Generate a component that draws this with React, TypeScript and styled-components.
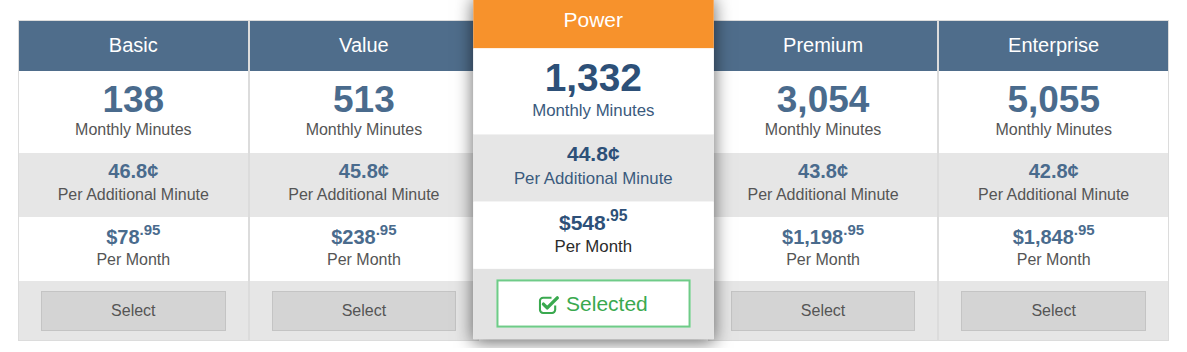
import React, { FunctionComponent } from 'react';
import styled, { createGlobalStyle, css } from 'styled-components';

const GlobalStyle = createGlobalStyle`
	html, body {
		margin: 0;
		padding: 0;
		background: #fff;
		overflow: hidden;
	}
	body {
		font-family: "Liberation Sans", Arial, Helvetica, sans-serif;
	}
`;

type Plan = {
	name: string;
	minutes: string;
	rate: string;
	price: string;
	selected?: boolean;
};

const plans: Plan[] = [
	{ name: 'Basic', minutes: '138', rate: '46.8¢', price: '$78' },
	{ name: 'Value', minutes: '513', rate: '45.8¢', price: '$238' },
	{ name: 'Power', minutes: '1,332', rate: '44.8¢', price: '$548', selected: true },
	{ name: 'Premium', minutes: '3,054', rate: '43.8¢', price: '$1,198' },
	{ name: 'Enterprise', minutes: '5,055', rate: '42.8¢', price: '$1,848' },
];

const Table = styled.div`
	display: flex;
	align-items: flex-start;
	margin: 20px 18px 0;
`;

const Column = styled.div<{ $featured?: boolean }>`
	flex: 1 1 0;
	min-width: 0;
	box-sizing: border-box;
	border: 1px solid #dcdcdc;
	background: #fff;
	text-align: center;

	${(p) =>
		p.$featured &&
		css`
			border: none;
			position: relative;
			z-index: 2;
			transform: translateY(-17px) scale(1.05);
			box-shadow: 0 4px 16px rgba(0, 0, 0, 0.6);
		`}
`;

const Header = styled.div<{ $featured?: boolean }>`
	height: ${(p) => (p.$featured ? '51px' : '50px')};
	line-height: ${(p) => (p.$featured ? '49px' : '48px')};
	background: ${(p) => (p.$featured ? '#f7922c' : '#4f6d8b')};
	color: #fff;
	font-size: 20px;
`;

const Row = styled.div<{ $shade?: boolean; $top: number; $h: number }>`
	box-sizing: border-box;
	height: ${(p) => p.$h}px;
	padding-top: ${(p) => p.$top}px;
	background: ${(p) => (p.$shade ? '#e6e6e6' : '#fff')};
`;

const Big = styled.div<{ $featured?: boolean }>`
	font-size: 37px;
	line-height: 40px;
	font-weight: bold;
	color: ${(p) => (p.$featured ? '#2d5078' : '#4a6b8d')};
`;

const Amount = styled.div<{ $featured?: boolean; $lh: number }>`
	font-size: 20px;
	line-height: ${(p) => p.$lh}px;
	font-weight: bold;
	color: ${(p) => (p.$featured ? '#2d5078' : '#4a6b8d')};
`;

const Cents = styled.span`
	font-size: 15px;
	line-height: 0;
	vertical-align: 9px;
`;

const Label = styled.div<{ $color: string; $lh: number }>`
	font-size: 16px;
	line-height: ${(p) => p.$lh}px;
	color: ${(p) => p.$color};
`;

const ButtonRow = styled.div<{ $featured?: boolean }>`
	box-sizing: border-box;
	height: ${(p) => (p.$featured ? '67px' : '59px')};
	padding: 10px 22px 0;
	background: ${(p) => (p.$featured ? '#e3e3e3' : '#e6e6e6')};
`;

const SelectButton = styled.div`
	box-sizing: border-box;
	height: 40px;
	border: 1px solid #c4c4c4;
	background: #d4d4d4;
	color: #555;
	font-size: 16px;
	line-height: 38px;
`;

const SelectedButton = styled.div`
	box-sizing: border-box;
	height: 46px;
	border: 2px solid #6fcb88;
	background: #fff;
	color: #3aa94f;
	font-size: 20px;
	display: flex;
	align-items: center;
	justify-content: center;
	gap: 6px;
`;

const CheckIcon: FunctionComponent = () => (
	<svg width="20" height="19" viewBox="0 0 20 19" aria-hidden="true">
		<path
			d="M12.5 3.5 H4.5 a3 3 0 0 0 -3 3 v8.5 a3 3 0 0 0 3 3 h8.5 a3 3 0 0 0 3 -3 v-4"
			fill="none"
			stroke="#3aa94f"
			strokeWidth="2"
		/>
		<path d="M4.8 9.6 L8.4 13.2 L18 3.6" fill="none" stroke="#3aa94f" strokeWidth="3.2" strokeLinecap="round" strokeLinejoin="round" />
	</svg>
);

const App: FunctionComponent = () => {
	return (
		<>
			<GlobalStyle />
			<Table>
				{plans.map((plan) => {
					const f = plan.selected;
					return (
						<Column key={plan.name} $featured={f}>
							<Header $featured={f}>{plan.name}</Header>
							<Row $top={9} $h={82}>
								<Big $featured={f}>{plan.minutes}</Big>
								<Label $lh={20} $color={f ? '#3a5a7d' : '#555'}>
									Monthly Minutes
								</Label>
							</Row>
							<Row $shade $top={6} $h={64}>
								<Amount $featured={f} $lh={25}>
									{plan.rate}
								</Amount>
								<Label $lh={22} $color={f ? '#3a5a7d' : '#555'}>
									Per Additional Minute
								</Label>
							</Row>
							<Row $top={8} $h={64}>
								<Amount $featured={f} $lh={24}>
									{plan.price}
									<Cents>.95</Cents>
								</Amount>
								<Label $lh={22} $color={f ? '#2b2b2b' : '#555'}>
									Per Month
								</Label>
							</Row>
							<ButtonRow $featured={f}>
								{f ? (
									<SelectedButton>
										<CheckIcon />
										Selected
									</SelectedButton>
								) : (
									<SelectButton>Select</SelectButton>
								)}
							</ButtonRow>
						</Column>
					);
				})}
			</Table>
		</>
	);
};

export default App;
